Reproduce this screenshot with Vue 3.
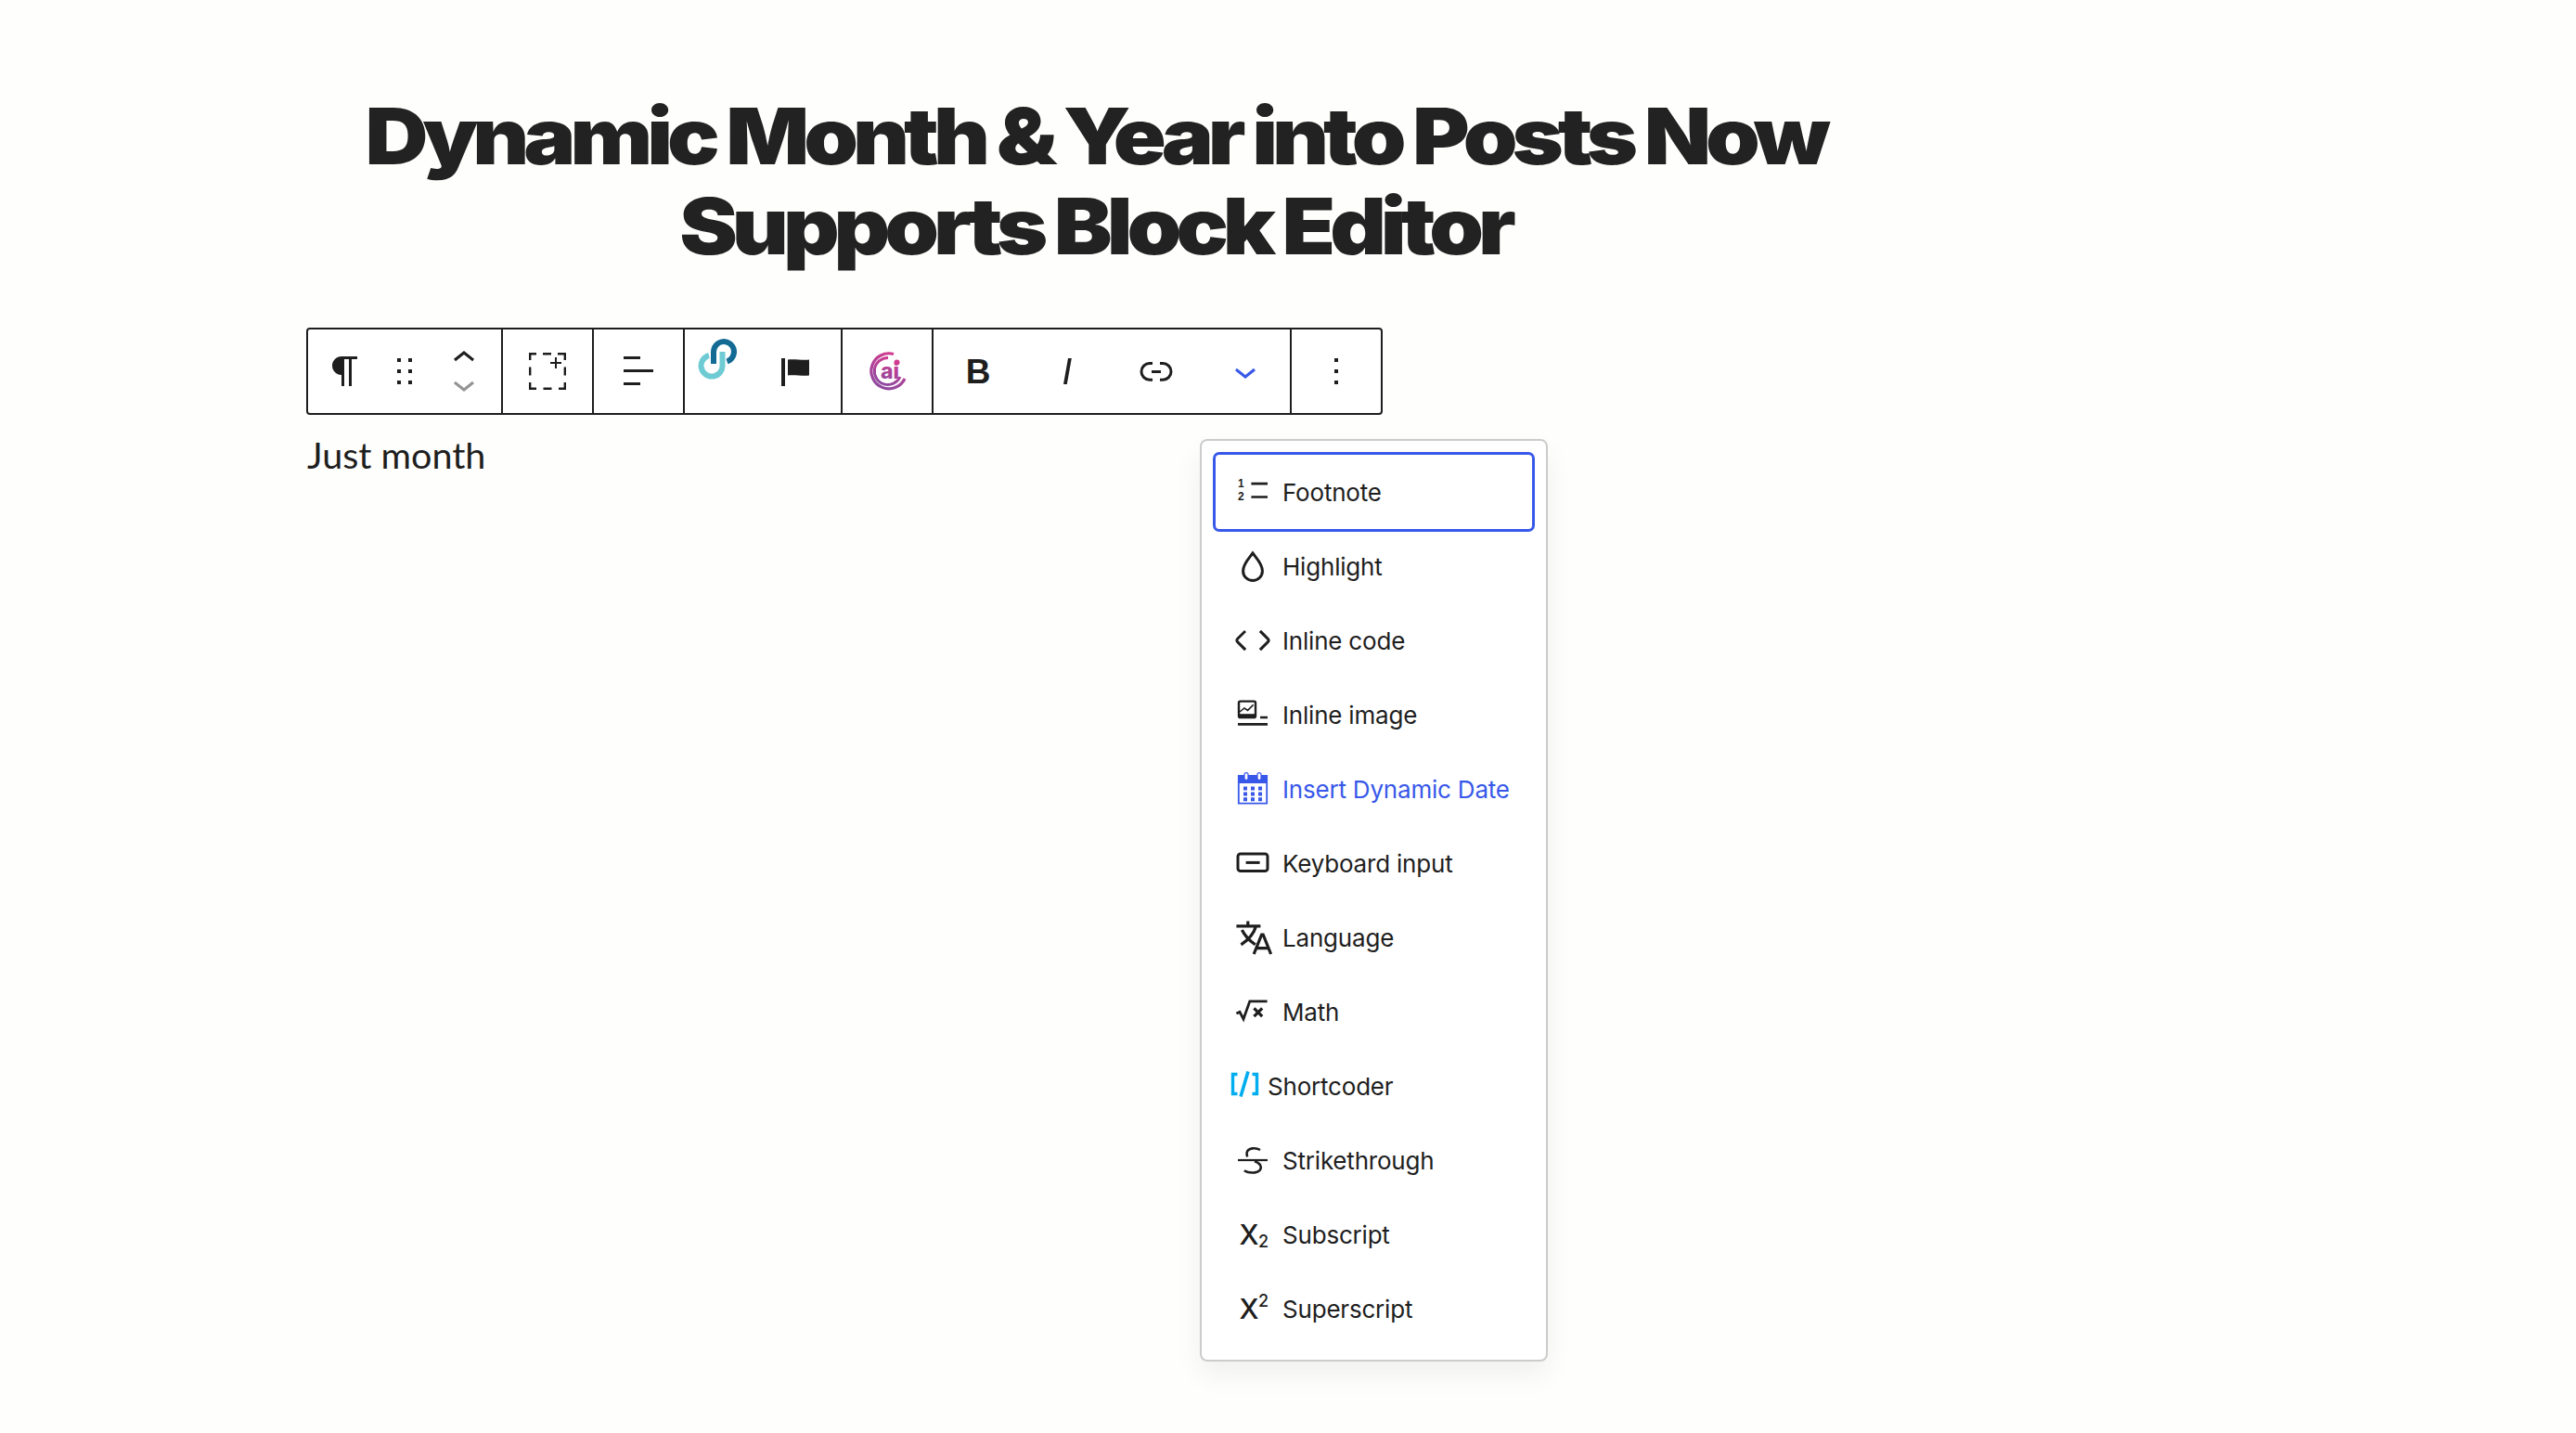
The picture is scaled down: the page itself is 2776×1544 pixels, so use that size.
<template>
  <div class="page">
    <div class="column">
      <h1 class="title">Dynamic Month &amp; Year into Posts Now Supports Block Editor</h1>

      <div class="toolbar">
        <div class="group">
          <button class="tool wide">
            <svg viewBox="0 0 24 24"><path d="m9.99609 14v-.2251l.00391.0001v6.225h1.5v-14.5h2.5v14.5h1.5v-14.5h3v-1.5h-8.50391c-2.76142 0-5 2.23858-5 5 0 2.7614 2.23858 5 5 5z" /></svg>
          </button>
          <button class="tool narrow">
            <svg viewBox="0 0 24 24"><path d="M8 7h2V5H8v2zm0 6h2v-2H8v2zm0 6h2v-2H8v2zm6-14v2h2V5h-2zm0 8h2v-2h-2v2zm0 6h2v-2h-2v2z" /></svg>
          </button>
          <div class="tool wide mover">
            <svg viewBox="0 0 24 24"><path d="M6.5 12.4L12 8l5.5 4.4-.9 1.2L12 10l-4.5 3.6-1-1.2z" /></svg>
            <svg class="disabled" viewBox="0 0 24 24"><path d="M17.5 11.6L12 16l-5.5-4.4.9-1.2L12 14l4.5-3.6 1 1.2z" /></svg>
          </div>
        </div>

        <div class="group">
          <button class="tool">
            <svg class="outline dashed" viewBox="0 0 40 40" stroke="#1e1e1e" stroke-width="2.4">
              <path d="M1.2 8V1.2H8M15 1.2h9M31 1.2h7.800V8M38.800 15.500v9M38.800 32v6.800H32M24.500 38.800h-9M8 38.800H1.200V32M1.200 24.500v-9" />
              <path d="M29 5v12M23 11h12" stroke-width="2" />
            </svg>
          </button>
        </div>

        <div class="group">
          <button class="tool">
            <svg viewBox="0 0 24 24"><path d="M13 5.500H4V4h9v1.500Zm7 7H4V11h16v1.500Zm-7 7H4V18h9v1.500Z" /></svg>
          </button>
        </div>

        <div class="group">
          <button class="tool plugin">
            <svg class="outline chain" viewBox="0 0 60 52" stroke-width="6">
              <path d="M20 23A11.500 11.500 0 1 0 34.500 33V19" stroke="#6ecbd3" />
              <path d="M25 32V19A11 11 0 1 1 39.500 29.500" stroke="#136a93" />
            </svg>
          </button>
          <button class="tool plugin flag">
            <svg viewBox="0 0 30 30"><path d="M0 0h4v30H0zM7 1.500c6 -1 17 1 23 0v17c-6 1 -17 -1 -23 0z" /></svg>
          </button>
        </div>

        <div class="group">
          <button class="tool">
            <svg class="outline ai" viewBox="0 0 52 50">
              <defs>
                <linearGradient id="aiGrad" x1="0.700" y1="0" x2="0.300" y2="1">
                  <stop offset="0" stop-color="#d23a8f" />
                  <stop offset="1" stop-color="#8d4aa0" />
                </linearGradient>
              </defs>
              <path d="M33 6.500A19 19 0 1 0 45 33" stroke="url(#aiGrad)" stroke-width="3.200" />
              <path d="M27 10.500A14.500 14.500 0 1 0 40 31" stroke="url(#aiGrad)" stroke-width="3" />
              <circle cx="36.500" cy="15.500" r="3" fill="#d23a8f" />
              <text x="29" y="33" text-anchor="middle" class="ai-text" fill="url(#aiGrad)">ai</text>
            </svg>
          </button>
        </div>

        <div class="group">
          <button class="tool"><span class="bold">B</span></button>
          <button class="tool">
            <svg viewBox="0 0 24 24"><path d="M12.500 5L10 19h1.900l2.500-14z" /></svg>
          </button>
          <button class="tool">
            <svg viewBox="0 0 24 24"><path d="M10 17.389H8.444A5.194 5.194 0 1 1 8.444 7H10v1.500H8.444a3.694 3.694 0 0 0 0 7.389H10v1.500ZM14 7h1.556a5.194 5.194 0 0 1 0 10.390H14v-1.500h1.556a3.694 3.694 0 0 0 0-7.390H14V7Zm-4.500 6h5v-1.500h-5V13Z" /></svg>
          </button>
          <button class="tool">
            <svg class="accent" viewBox="0 0 24 24"><path d="M17.500 11.600L12 16l-5.500-4.400.9-1.200L12 14l4.500-3.600 1 1.200z" /></svg>
          </button>
        </div>

        <div class="group">
          <button class="tool">
            <svg viewBox="0 0 24 24"><path d="M13 19h-2v-2h2v2zm0-6h-2v-2h2v2zm0-6h-2V5h2v2z" /></svg>
          </button>
        </div>
      </div>

      <p class="para">Just month</p>
    </div>

    <div class="menu">
      <div class="item focus">
        <svg viewBox="0 0 24 24" fill="#1e1e1e">
          <text x="4" y="9.700" class="tiny">1</text>
          <text x="4" y="16.700" class="tiny">2</text>
          <path d="M11.200 6.900H20v1.300h-8.800zM11.200 14.100H20v1.300h-8.800z" />
        </svg>
        <span>Footnote</span>
      </div>
      <div class="item">
        <svg viewBox="0 0 24 24" fill="none" stroke="#1e1e1e" stroke-width="1.500">
          <path d="M12 5C9.800 8 6.800 10.800 6.800 14.600a5.200 5.200 0 0 0 10.400 0C17.200 10.800 14.200 8 12 5z" />
        </svg>
        <span>Highlight</span>
      </div>
      <div class="item">
        <svg viewBox="0 0 24 24" fill="#1e1e1e"><path d="M20.800 10.700l-4.300-4.300-1.100 1.100 4.300 4.300c.1.100.1.300 0 .4l-4.300 4.300 1.100 1.100 4.300-4.300c.7-.8.7-1.900 0-2.600zM4.200 11.800l4.300-4.300-1-1-4.300 4.300c-.7.700-.7 1.800 0 2.500l4.300 4.300 1.100-1.100-4.300-4.300c-.2-.1-.2-.3-.1-.4z" /></svg>
        <span>Inline code</span>
      </div>
      <div class="item">
        <svg viewBox="0 0 24 24" fill="none" stroke="#1e1e1e">
          <rect x="4.500" y="4.800" width="9" height="8.700" rx="0.800" stroke-width="1.200" />
          <path d="M5 10.500l2.500-2 1.800 1.200 3-3" stroke-width="0.800" />
          <path d="M4.800 12.400h8.400" stroke-width="1.600" />
          <path d="M4 17.200h16M16 13.500h4" stroke-width="1.300" />
        </svg>
        <span>Inline image</span>
      </div>
      <div class="item accent-row">
        <svg viewBox="0 0 24 24" fill="none">
          <path d="M4.400 5h15.200v14.800H4.400z" stroke="#3858e9" stroke-width="0.900" />
          <path d="M4 5h16v4H4z" fill="#3858e9" />
          <rect x="7.500" y="3.300" width="2" height="4" rx="1" fill="#fff" stroke="#3858e9" stroke-width="0.600" />
          <rect x="14.500" y="3.300" width="2" height="4" rx="1" fill="#fff" stroke="#3858e9" stroke-width="0.600" />
          <path d="M7 10.800h2v2H7zM11 10.800h2v2h-2zM15 10.800h2v2h-2zM7 13.700h2v2H7zM11 13.700h2v2h-2zM15 13.700h2v2h-2zM7 16.600h2v2H7zM11 16.600h2v2h-2zM15 16.600h2v2h-2z" fill="#3858e9" />
        </svg>
        <span>Insert Dynamic Date</span>
      </div>
      <div class="item">
        <svg viewBox="0 0 24 24" fill="none" stroke="#1e1e1e" stroke-width="1.500">
          <rect x="4" y="7" width="16" height="9.300" rx="1.400" />
          <path d="M8.300 11.700h7.500" />
        </svg>
        <span>Keyboard input</span>
      </div>
      <div class="item">
        <svg viewBox="0 0 24 24" fill="none" stroke="#1e1e1e" stroke-width="1.600">
          <path d="M3.200 5.900h13M9.400 3.200v2.700M13.800 5.900C12.500 10.200 9.500 13.500 5.700 15.900M6.200 8c1.500 3 4.400 6 7.200 7.900" />
          <path d="M12.600 21l4.200-10.500h.8L21.800 21M14 17.800h6.300" />
        </svg>
        <span>Language</span>
      </div>
      <div class="item">
        <svg viewBox="0 0 24 24" fill="none" stroke="#1e1e1e" stroke-width="1.400">
          <path d="M3.200 13l1.800-.8 2 3.800 3.400-9.600h9.400" />
          <path d="M12.700 10.200l4.400 4.400M17.100 10.200l-4.400 4.400" stroke-width="1.600" />
        </svg>
        <span>Math</span>
      </div>
      <div class="item shortcoder">
        <svg viewBox="0 0 32 32" fill="none" stroke="#00aeef" stroke-width="3.400">
          <path d="M7.500 3.500H2.500v21h5M23.500 3.500h5v21h-5" />
          <path d="M19 0.500l-8 27" stroke-width="3.600" />
        </svg>
        <span>Shortcoder</span>
      </div>
      <div class="item">
        <svg viewBox="0 0 24 24" fill="none" stroke="#1e1e1e" stroke-width="1.300">
          <path d="M16 6.500C14 5.300 9.200 5 8.800 8.200c-.1.800 0 1.400.4 2" />
          <path d="M4 12h16" stroke-width="1.100" />
          <path d="M13 12.600c2 .7 3.400 1.600 3.400 3.300 0 3.300-5.900 3.500-9 1.800" />
        </svg>
        <span>Strikethrough</span>
      </div>
      <div class="item">
        <svg viewBox="0 0 24 24" fill="#1e1e1e">
          <text x="4.800" y="17.500" class="big-x">X</text>
          <text x="15" y="19" class="small-n">2</text>
        </svg>
        <span>Subscript</span>
      </div>
      <div class="item">
        <svg viewBox="0 0 24 24" fill="#1e1e1e">
          <text x="4.800" y="17.500" class="big-x">X</text>
          <text x="15" y="10.800" class="small-n">2</text>
        </svg>
        <span>Superscript</span>
      </div>
    </div>
  </div>
</template>

<script setup>
</script>

<style>
html,
body {
  background: #fefefc;
}
</style>

<style scoped>
.page {
  position: relative;
  width: 2776px;
  height: 1544px;
  overflow: hidden;
  background: #fefefc;
  color: #1e1e1e;
  font-family: Inter, "Liberation Sans", sans-serif;
}

.column {
  width: 1700px;
  margin-left: 330px;
  padding-top: 98px;
}

.title {
  margin: 0 0 61px;
  font-family: Inter, sans-serif;
  font-size: 84px;
  font-weight: 900;
  line-height: 97px;
  letter-spacing: -5.400px;
  text-align: center;
  color: #222;
  transform: scaleX(1.12);
}

.toolbar {
  display: flex;
  width: 1160px;
  height: 94px;
  box-sizing: border-box;
  border: 2px solid #1e1e1e;
  border-radius: 4px;
  background: #fff;
}

.group {
  display: flex;
  border-right: 2px solid #1e1e1e;
}

.group:last-child {
  border-right: 0;
}

.tool {
  display: flex;
  align-items: center;
  justify-content: center;
  width: 96px;
  padding: 0;
  border: 0;
  background: none;
  color: #1e1e1e;
}

.tool.wide {
  width: 80px;
}

.tool.narrow {
  width: 48px;
}

.tool.plugin {
  width: 84px;
}

.tool svg {
  width: 48px;
  height: 48px;
  fill: #1e1e1e;
}

.tool svg.outline {
  fill: none;
}

.tool svg.dashed {
  width: 40px;
  height: 40px;
}

.mover {
  flex-direction: column;
}

.mover svg + svg {
  margin-top: -20px;
}

.mover .disabled {
  fill: #949494;
}

.tool svg.chain {
  flex: none;
  width: 60px;
  height: 52px;
  margin: -28px 12px 0 0;
}

.flag svg {
  width: 30px;
  height: 30px;
  margin: 2px 14px 0 0;
}

.tool svg.ai {
  width: 52px;
  height: 50px;
}

.ai-text {
  font-family: Inter, sans-serif;
  font-size: 23px;
  font-weight: 800;
}

.bold {
  font-size: 37px;
  font-weight: 700;
  line-height: 1;
}

.tool svg.accent {
  fill: #3858e9;
}

.para {
  margin: 17px 0 0;
  padding-left: 1px;
  font-family: Lato, sans-serif;
  font-size: 39.500px;
  font-weight: 400;
  line-height: 52px;
}

.menu {
  position: absolute;
  left: 1293px;
  top: 473px;
  box-sizing: border-box;
  width: 375px;
  height: 994px;
  padding: 15px;
  border: 2px solid #ccc;
  border-radius: 8px;
  background: #fff;
  box-shadow: 0 14px 30px rgba(0, 0, 0, 0.06);
}

.item {
  display: flex;
  align-items: center;
  gap: 8px;
  height: 80px;
  padding-left: 16px;
  border-radius: 4px;
  font-size: 26px;
  letter-spacing: -0.200px;
}

.item svg {
  flex: none;
  width: 48px;
  height: 48px;
}

.focus {
  outline: 3px solid #3858e9;
}

.accent-row {
  color: #3858e9;
}

.item.shortcoder svg {
  width: 32px;
  height: 32px;
}

.tiny {
  font-family: "Liberation Sans", sans-serif;
  font-size: 6px;
  font-weight: 700;
}

.big-x {
  font-family: Inter, sans-serif;
  font-size: 15px;
  font-weight: 500;
}

.small-n {
  font-family: Inter, sans-serif;
  font-size: 9px;
  font-weight: 500;
}
</style>
